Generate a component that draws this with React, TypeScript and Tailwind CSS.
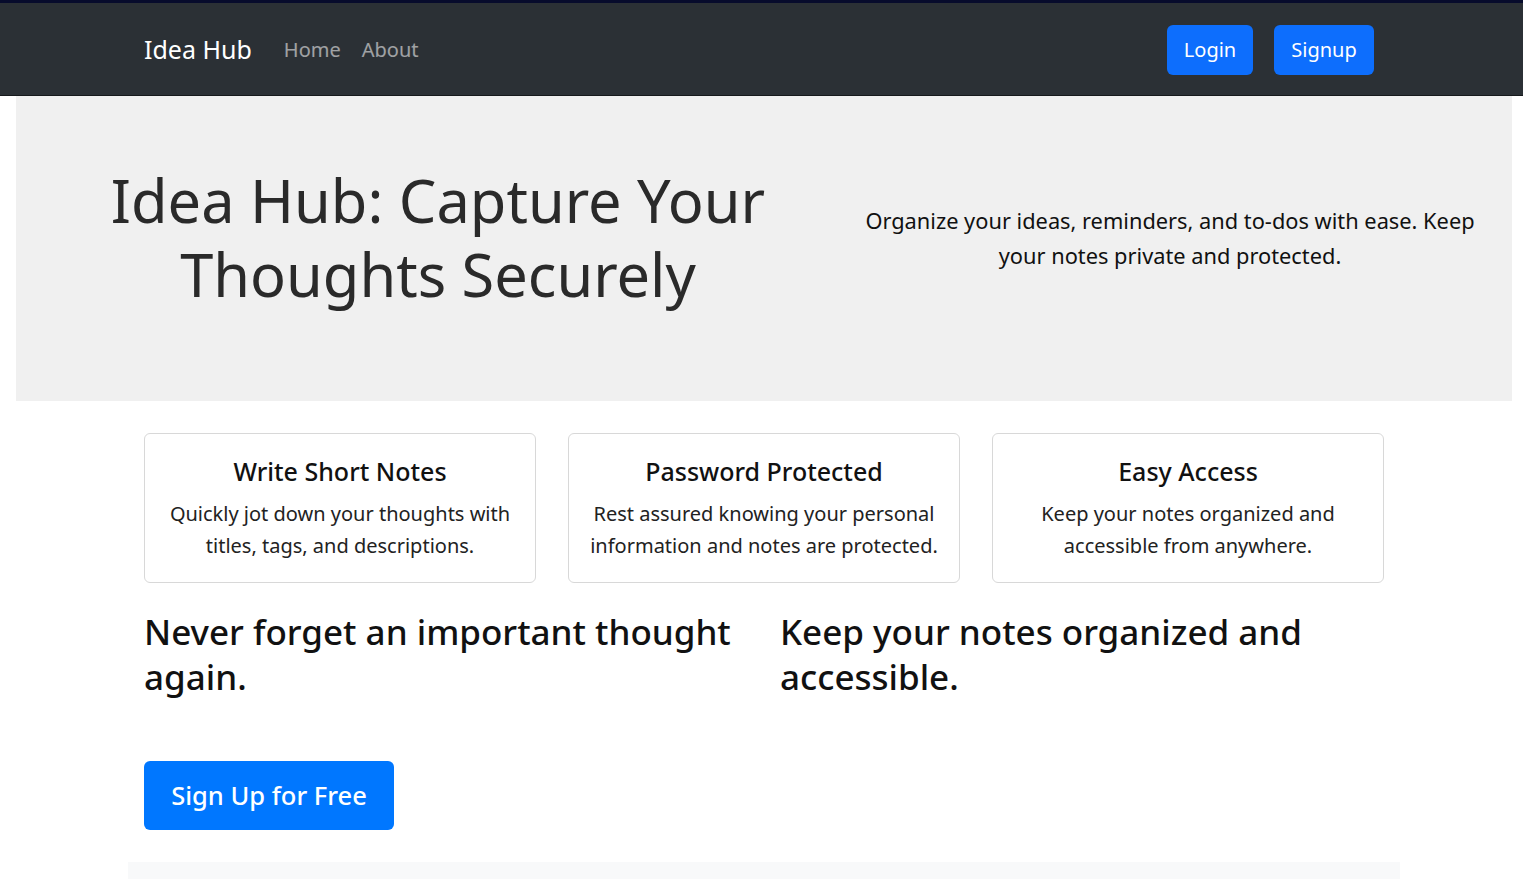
const features = [
  {
    title: "Write Short Notes",
    text: "Quickly jot down your thoughts with titles, tags, and descriptions.",
  },
  {
    title: "Password Protected",
    text: "Rest assured knowing your personal information and notes are protected.",
  },
  {
    title: "Easy Access",
    text: "Keep your notes organized and accessible from anywhere.",
  },
];

function Navbar() {
  return (
    <nav className="border-t-[3px] border-t-[#070b2c] border-b border-b-[#16191c] bg-[#2b3035]">
      <div className="flex h-[92px] items-center pl-[144px] pr-[149px] pt-[2px]">
        <a href="#" className="mr-[32px] text-[25px] text-white">
          Idea Hub
        </a>
        <div className="flex gap-[21px] text-[20px] text-white/55">
          <a href="#">Home</a>
          <a href="#">About</a>
        </div>
        <div className="ml-auto flex gap-[21px]">
          <button className="h-[50px] w-[86px] rounded-[6px] bg-[#0d6efd] text-[20px] text-white">
            Login
          </button>
          <button className="h-[50px] w-[100px] rounded-[6px] bg-[#0d6efd] text-[20px] text-white">
            Signup
          </button>
        </div>
      </div>
    </nav>
  );
}

function Hero() {
  return (
    <section className="mx-[16px] w-[1496px] bg-[#f0f0f0]">
      <div className="flex h-[305px] items-start pt-[67px]">
        <h1 className="w-[844px] text-center text-[59.5px] leading-[74px] text-[#2a2a2a]">
          Idea Hub: Capture Your Thoughts Securely
        </h1>
        <p className="mt-[40px] w-[620px] text-center text-[21.8px] leading-[35px] text-[#111]">
          Organize your ideas, reminders, and to-dos with ease. Keep your notes private and protected.
        </p>
      </div>
    </section>
  );
}

export default function App() {
  return (
    <div className="min-h-screen w-[1523px] bg-white font-['Noto_Sans',sans-serif]">
      <Navbar />
      <Hero />

      <main className="px-[144px] pt-[32px]">
        <div className="grid w-[1240px] grid-cols-3 gap-[32px]">
          {features.map((f) => (
            <div
              key={f.title}
              className="flex h-[150px] flex-col items-center rounded-[6px] border border-[#d8d8d8] px-[20px] pt-[19px] text-center"
            >
              <h5 className="text-[25px] font-medium leading-[36px] text-[#111]">{f.title}</h5>
              <p className="mt-[9px] text-[20px] leading-[32px] text-[#222]">{f.text}</p>
            </div>
          ))}
        </div>

        <div className="mt-[26px] grid w-[1240px] grid-cols-2 gap-[32px]">
          <h2 className="text-[35px] font-medium leading-[45px] text-[#111]">
            Never forget an important thought again.
          </h2>
          <h2 className="text-[35px] font-medium leading-[45px] text-[#111]">
            Keep your notes organized and accessible.
          </h2>
        </div>

        <button className="mt-[62px] h-[69px] w-[250px] rounded-[6px] bg-[#0077ff] text-[25.5px] font-medium text-white">
          Sign Up for Free
        </button>
      </main>

      <div className="mx-[128px] mt-[32px] h-[40px] w-[1272px] bg-[#f8f9fa]" />
    </div>
  );
}
